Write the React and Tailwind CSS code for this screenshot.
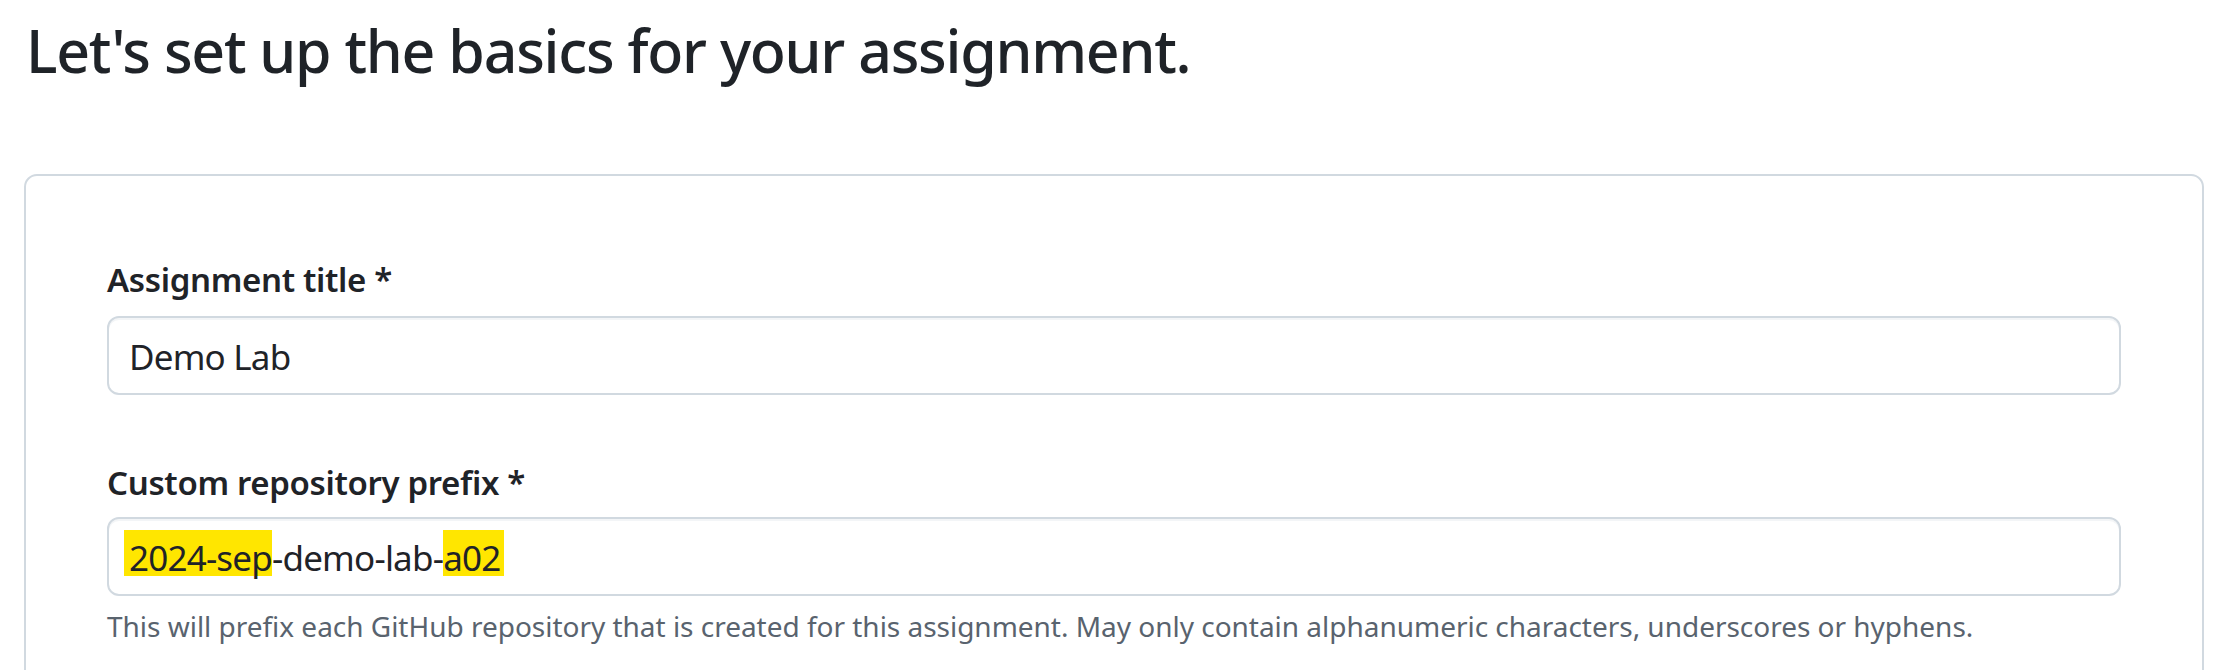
import React from 'react';

const font = { fontFamily: '"Noto Sans", "Open Sans", sans-serif' };

const Highlight = ({ children, className = '' }) => (
  <span
    className={`bg-[linear-gradient(#ffe600,#ffe600)] bg-no-repeat bg-[length:100%_46px] bg-top pt-[4px] ${className}`}
  >
    {children}
  </span>
);

const App = () => {
  return (
    <div
      className="h-[670px] w-[2235px] overflow-hidden bg-white text-[#1f2328]"
      style={font}
    >
      {/* Page title */}
      <h1 className="pl-[26px] pt-[14px] text-[59px] leading-[72px] font-medium tracking-[-1.25px]">
        Let's set up the basics for your assignment.
      </h1>

      {/* Form card */}
      <div className="ml-[24px] mt-[88px] w-[2180px] rounded-[13px] border-2 border-[#d1d9e0] px-[81px] pt-[84px] pb-[120px]">
        <label className="block text-[33px] leading-[40px] font-semibold tracking-[-0.35px]">
          Assignment title *
        </label>
        <div className="mt-[16px] h-[79px] rounded-[12px] border-2 border-[#d1d9e0] bg-white pl-[20px] text-[35px] leading-[77px] tracking-[-0.8px] shadow-[inset_0_2px_0_rgba(208,215,222,0.25)]">
          Demo Lab
        </div>

        <label className="mt-[68px] block text-[33px] leading-[40px] font-semibold tracking-[-0.35px]">
          Custom repository prefix *
        </label>
        <div className="mt-[14px] h-[79px] rounded-[12px] border-2 border-[#d1d9e0] bg-white pl-[20px] text-[35px] leading-[77px] tracking-[-0.8px] shadow-[inset_0_2px_0_rgba(208,215,222,0.25)]">
          <Highlight className="-ml-[5px] pl-[5px]">2024-sep</Highlight>
          -demo-lab-
          <Highlight className="pr-[4px]">a02</Highlight>
        </div>
        <p className="mt-[12px] text-[28px] leading-[36px] text-[#59636e] tracking-[-0.02px]">
          This will prefix each GitHub repository that is created for this assignment. May only contain alphanumeric characters, underscores or hyphens.
        </p>
      </div>
    </div>
  );
};

export default App;
